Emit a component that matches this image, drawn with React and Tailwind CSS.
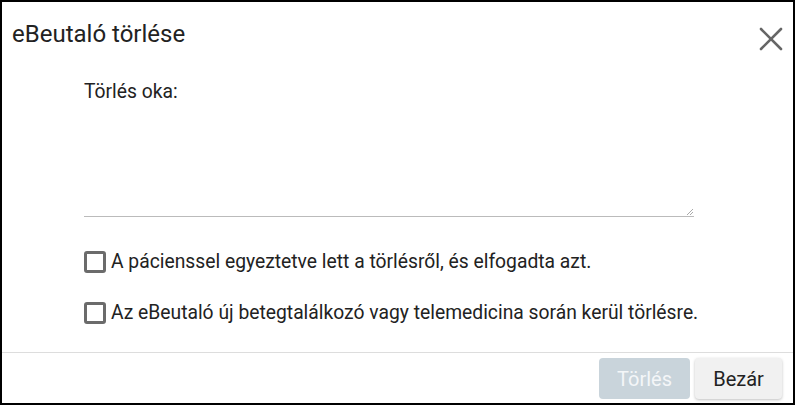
import React from 'react';

const font = { fontFamily: 'Roboto, "Liberation Sans", sans-serif' };

function Check({ label }) {
    return (
        <label className="flex items-center gap-[5px] h-[22px]">
            <span className="w-[22px] h-[22px] rounded-[3px] border-[3px] border-[#6b6b6b] bg-white shrink-0" />
            <span className="text-[19.3px] text-[#222] leading-none whitespace-nowrap">{label}</span>
        </label>
    );
}

export default function App() {
    return (
        <div className="w-[795px] h-[405px] border-2 border-black bg-white flex flex-col" style={font}>
            <div className="flex items-start justify-between pl-[10px] pr-[10px] pt-[18px] h-[52px]">
                <h1 className="text-[24px] leading-[28px] text-[#222]">eBeutaló törlése</h1>
                <svg width="24" height="24" viewBox="0 0 24 24" className="mt-[7px]" stroke="#666" strokeWidth="2.6" strokeLinecap="round">
                    <line x1="2" y1="2" x2="22" y2="22" />
                    <line x1="22" y1="2" x2="2" y2="22" />
                </svg>
            </div>
            <div className="flex-1 pl-[82px]">
                <div className="text-[19.3px] leading-[22px] text-[#222] mt-[27px]">Törlés oka:</div>
                <div className="relative w-[610px] h-[114px] border-b border-[#bbb]">
                    <svg width="6" height="6" viewBox="0 0 6 6" className="absolute right-[1px] bottom-[1px]" stroke="#aaa" strokeWidth="1">
                        <line x1="6" y1="0" x2="0" y2="6" />
                        <line x1="6" y1="3" x2="3" y2="6" />
                    </svg>
                </div>
                <div className="flex flex-col gap-[29px] mt-[34px]">
                    <Check label="A pácienssel egyeztetve lett a törlésről, és elfogadta azt." />
                    <Check label="Az eBeutaló új betegtalálkozó vagy telemedicina során kerül törlésre." />
                </div>
            </div>
            <div className="border-t border-[#ddd] flex justify-end gap-[5px] pt-[5px] pr-[11px] pb-[4px]">
                <button className="w-[91px] h-[41px] rounded-[4px] bg-[#c9d4db] text-[#f4f6f8] text-[20px]">Törlés</button>
                <button className="w-[87px] h-[41px] rounded-[4px] bg-[#f1f1f1] text-[#222] text-[20px] shadow-[0_1px_3px_rgba(0,0,0,0.25)]">Bezár</button>
            </div>
        </div>
    );
}
